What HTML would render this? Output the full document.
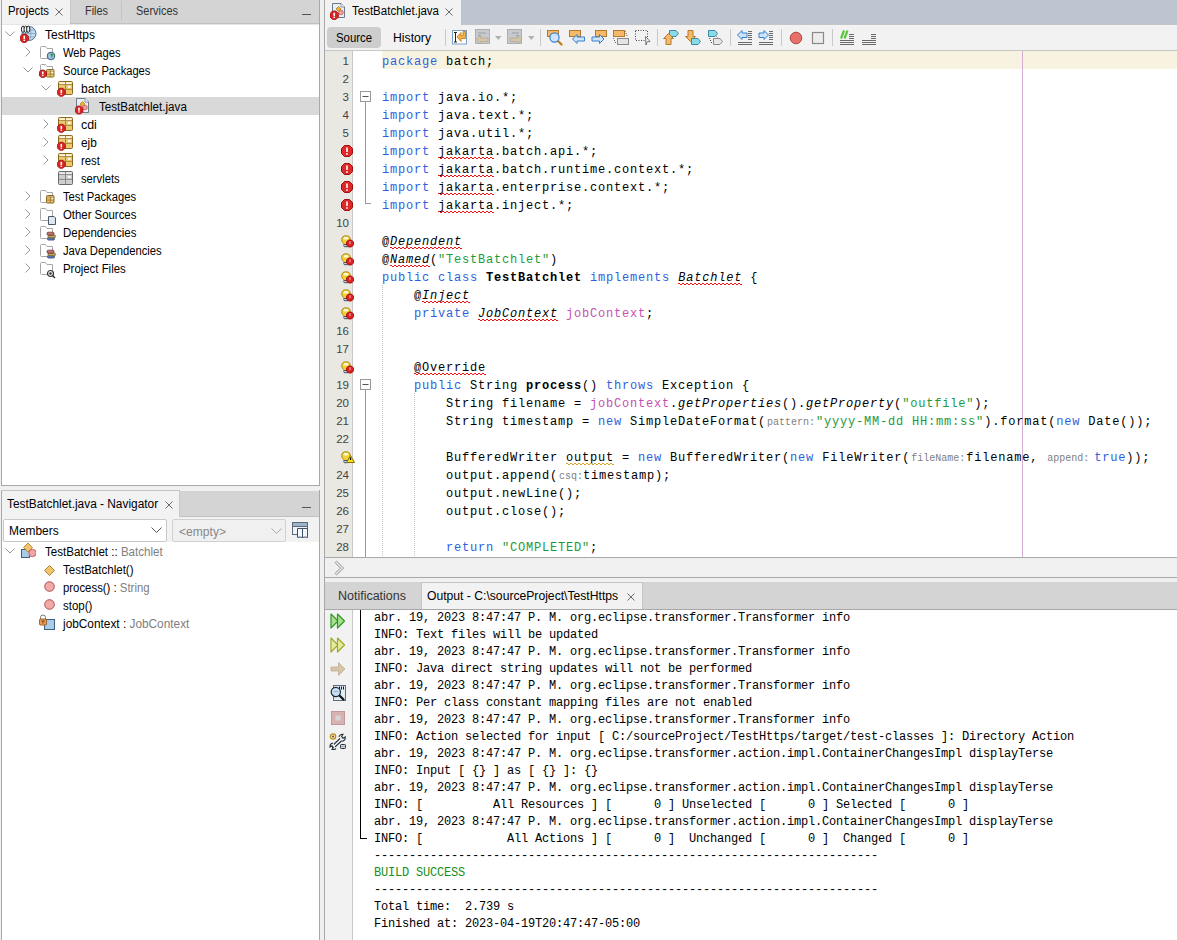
<!DOCTYPE html><html><head><meta charset="utf-8"><style>
*{margin:0;padding:0;box-sizing:border-box}
html,body{width:1177px;height:940px;overflow:hidden}
body{background:#f0f0f0;font-family:"Liberation Sans",sans-serif;font-size:12px;color:#000;position:relative}
.a{position:absolute}
.t{position:absolute;white-space:pre;line-height:14px}
.m{font-family:"Liberation Mono",monospace}
.k{color:#2f5fe0}
.s{color:#1e9a3a}
.f{color:#c74fb4}
.g{color:#808080}
.b{font-weight:bold}
.i{font-style:italic}
.w,.ww{position:relative}.w::after,.ww::after{content:'';position:absolute;left:0;right:0;bottom:0px;height:2px;background:repeating-linear-gradient(90deg,#f01010 0 2px,transparent 2px 4px) 0 0/100% 1px no-repeat,repeating-linear-gradient(90deg,transparent 0 2px,#f01010 2px 4px) 0 1px/100% 1px no-repeat}
.ww::after{background:repeating-linear-gradient(90deg,#e0a020 0 2px,transparent 2px 4px) 0 0/100% 1px no-repeat,repeating-linear-gradient(90deg,transparent 0 2px,#e0a020 2px 4px) 0 1px/100% 1px no-repeat}
.h{display:inline-block;font-size:10px;letter-spacing:0;color:#808080;vertical-align:baseline;padding-left:1px}
</style></head><body>
<div class="a" style="left:2px;top:0px;width:317px;height:24px;background:#d4d4d4;"></div>
<div class="a" style="left:2px;top:0px;width:68px;height:24px;background:#f2f2f2;"></div>
<div class="a" style="left:121px;top:1px;width:1px;height:19px;background:#c4c4c4;"></div>
<div class="a" style="left:70px;top:0px;width:1px;height:24px;background:#c8c8c8;"></div>
<div class="a" style="left:70px;top:23px;width:249px;height:1px;background:#c0c0c0;"></div>
<div class="a" style="left:1px;top:0px;width:1px;height:486px;background:#a8a8a8;"></div>
<div class="a" style="left:319px;top:0px;width:1px;height:486px;background:#a8a8a8;"></div>
<div class="a" style="left:2px;top:24px;width:317px;height:1px;background:#e6e6e6;"></div>
<div class="a" style="left:2px;top:25px;width:317px;height:460px;background:#fff;"></div>
<div class="a" style="left:1px;top:485px;width:319px;height:1px;background:#a8a8a8;"></div>
<div class="t" style="left:8px;top:4px;font-size:12px;transform:scaleX(0.9467);transform-origin:0 0;">Projects</div>
<svg class="a" style="left:55px;top:8px" width="8" height="8" viewBox="0 0 8 8"><path d="M0.5 0.5 L7.5 7.5 M7.5 0.5 L0.5 7.5" stroke="#6a6a6a" stroke-width="1"/></svg>
<div class="t" style="left:85px;top:4px;font-size:12px;transform:scaleX(0.9092);transform-origin:0 0;color:#333">Files</div>
<div class="t" style="left:136px;top:4px;font-size:12px;transform:scaleX(0.9133);transform-origin:0 0;color:#333">Services</div>
<div class="a" style="left:302px;top:14px;width:9px;height:1px;background:#555;"></div>
<div class="a" style="left:2px;top:97px;width:317px;height:18px;background:#d9d9d9;"></div>
<svg class="a" style="left:5px;top:31px" width="10" height="6"><path d="M0.5 0.5 L5 5 L9.5 0.5" fill="none" stroke="#9a9a9a" stroke-width="1"/></svg>
<div class="t" style="left:45px;top:28px;font-size:12px;transform:scaleX(1.0);transform-origin:0 0;">TestHttps</div>
<svg class="a" style="left:20px;top:25px" width="18" height="18" viewBox="0 0 18 18"><circle cx="9" cy="8.5" r="7" fill="#c4dcf0" stroke="#4f6f8f" stroke-width="1"/><path d="M2.5 8.5 H15.5 M9 1.5 Q5 8.5 9 15.5 M9 1.5 Q13 8.5 9 15.5 M3.5 5 H14.5 M3.5 12 H14.5" fill="none" stroke="#7d9cb8" stroke-width=".7"/><ellipse cx="3" cy="4.2" rx="1.6" ry="3.2" fill="#f2f5f8" stroke="#222" stroke-width="1"/><ellipse cx="5.6" cy="4.2" rx="1.6" ry="3.2" fill="#f2f5f8" stroke="#222" stroke-width="1"/><ellipse cx="8.2" cy="4.2" rx="1.6" ry="3.2" fill="#f2f5f8" stroke="#222" stroke-width="1"/><path d="M2.55 9 H5.95 L8.5 11.55 V14.95 L5.95 17.5 H2.55 L0 14.95 V11.55Z" fill="#d82424" stroke="#9a0c0c" stroke-width="0.7" stroke-linejoin="miter"/><rect x="3.45" y="10.7" width="1.6" height="3.23" fill="#fff"/><rect x="3.45" y="14.61" width="1.6" height="1.36" fill="#fff"/></svg>
<svg class="a" style="left:25px;top:47px" width="6" height="10"><path d="M0.5 0.5 L5 5 L0.5 9.5" fill="none" stroke="#9a9a9a" stroke-width="1"/></svg>
<div class="t" style="left:63px;top:46px;font-size:12px;transform:scaleX(0.9317);transform-origin:0 0;">Web Pages</div>
<svg class="a" style="left:40px;top:46px" width="16" height="16" viewBox="0 0 16 16"><path d="M0.5 11.5 V1.5 Q0.5 0.5 1.5 0.5 H5.5 L7 2.5 H12.5 V11.5 Q12.5 12.5 11.5 12.5 H1.5 Q0.5 12.5 0.5 11.5Z" fill="#fff" stroke="#a6a6a6"/><circle cx="11" cy="10" r="3.8" fill="#9cc0e0" stroke="#3d5f80" stroke-width="1"/><path d="M10 7.5 L13.5 8 L12 12 Z" fill="#3aa030"/></svg>
<svg class="a" style="left:23px;top:67px" width="10" height="6"><path d="M0.5 0.5 L5 5 L9.5 0.5" fill="none" stroke="#9a9a9a" stroke-width="1"/></svg>
<div class="t" style="left:63px;top:64px;font-size:12px;transform:scaleX(0.9292);transform-origin:0 0;">Source Packages</div>
<svg class="a" style="left:39px;top:64px" width="16" height="16" viewBox="0 0 16 16"><path d="M1.5 11.5 V1.5 Q1.5 0.5 2.5 0.5 H6.5 L8 2.5 H13.5 V11.5 Q13.5 12.5 12.5 12.5 H2.5 Q1.5 12.5 1.5 11.5Z" fill="#fff" stroke="#a6a6a6"/><rect x="7.5" y="5.5" width="7.5" height="7.5" rx="1" fill="#ecc870" stroke="#8a6a20"/><rect x="8.5" y="6.2" width="2.25" height="1.53" fill="#fff4d8"/><rect x="11.75" y="6.2" width="2.25" height="1.53" fill="#fff4d8"/><path d="M11.25 6 V12.5 M8 7.125 H14.5 M8 10.1 H14.5" stroke="#8a6a20" stroke-width="0.9" opacity="0.75"/><rect x="12.61" y="8.06" width="1.53" height="1.105" fill="#fff"/><path d="M2.25 6 H5.25 L7.5 8.25 V11.25 L5.25 13.5 H2.25 L0 11.25 V8.25Z" fill="#d82424" stroke="#9a0c0c" stroke-width="0.7" stroke-linejoin="miter"/><rect x="2.95" y="7.5" width="1.6" height="2.85" fill="#fff"/><rect x="2.95" y="10.95" width="1.6" height="1.2" fill="#fff"/></svg>
<svg class="a" style="left:41px;top:85px" width="10" height="6"><path d="M0.5 0.5 L5 5 L9.5 0.5" fill="none" stroke="#9a9a9a" stroke-width="1"/></svg>
<div class="t" style="left:81px;top:82px;font-size:12px;transform:scaleX(1.0133);transform-origin:0 0;">batch</div>
<svg class="a" style="left:57px;top:81px" width="17" height="17" viewBox="0 0 17 17"><rect x="1.5" y="0.5" width="14" height="13" rx="1" fill="#ecc870" stroke="#8a6a20"/><rect x="2.5" y="1.2" width="5.5" height="2.52" fill="#fff4d8"/><rect x="9.0" y="1.2" width="5.5" height="2.52" fill="#fff4d8"/><path d="M8.5 1 V13 M2 3.5 H15 M2 8.4 H15" stroke="#8a6a20" stroke-width="0.9" opacity="0.75"/><rect x="10.9" y="5.04" width="2.6999999999999997" height="1.82" fill="#fff"/><path d="M2.6999999999999997 7.3 H5.9 L8.3 9.7 V12.9 L5.9 15.3 H2.6999999999999997 L0.3 12.9 V9.7Z" fill="#d82424" stroke="#9a0c0c" stroke-width="0.7" stroke-linejoin="miter"/><rect x="3.5" y="8.9" width="1.6" height="3.04" fill="#fff"/><rect x="3.5" y="12.58" width="1.6" height="1.28" fill="#fff"/></svg>
<div class="t" style="left:99px;top:100px;font-size:12px;transform:scaleX(0.9683);transform-origin:0 0;">TestBatchlet.java</div>
<svg class="a" style="left:75px;top:98px" width="16" height="17" viewBox="0 0 16 17"><path d="M1.5 0.5 H10 L13.5 4 V14.5 H1.5Z" fill="#e6eef7" stroke="#6e7a88"/><path d="M10 0.5 V4 H13.5" fill="#fff" stroke="#6e7a88" stroke-width=".8"/><path d="M7.5 3.5 L10 6 L7.5 8.5 L5 6Z" fill="#f0b030" stroke="#b07a10" stroke-width=".7"/><circle cx="10" cy="9.5" r="2.3" fill="#f3a0a0" stroke="#c05050" stroke-width=".7"/><path d="M2.4 8 H5.6 L8 10.4 V13.6 L5.6 16 H2.4 L0 13.6 V10.4Z" fill="#d82424" stroke="#9a0c0c" stroke-width="0.7" stroke-linejoin="miter"/><rect x="3.2" y="9.6" width="1.6" height="3.04" fill="#fff"/><rect x="3.2" y="13.280000000000001" width="1.6" height="1.28" fill="#fff"/></svg>
<svg class="a" style="left:43px;top:119px" width="6" height="10"><path d="M0.5 0.5 L5 5 L0.5 9.5" fill="none" stroke="#9a9a9a" stroke-width="1"/></svg>
<div class="t" style="left:81px;top:118px;font-size:12px;transform:scaleX(1.0325);transform-origin:0 0;">cdi</div>
<svg class="a" style="left:57px;top:117px" width="17" height="17" viewBox="0 0 17 17"><rect x="1.5" y="0.5" width="14" height="13" rx="1" fill="#ecc870" stroke="#8a6a20"/><rect x="2.5" y="1.2" width="5.5" height="2.52" fill="#fff4d8"/><rect x="9.0" y="1.2" width="5.5" height="2.52" fill="#fff4d8"/><path d="M8.5 1 V13 M2 3.5 H15 M2 8.4 H15" stroke="#8a6a20" stroke-width="0.9" opacity="0.75"/><rect x="10.9" y="5.04" width="2.6999999999999997" height="1.82" fill="#fff"/><path d="M2.6999999999999997 7.3 H5.9 L8.3 9.7 V12.9 L5.9 15.3 H2.6999999999999997 L0.3 12.9 V9.7Z" fill="#d82424" stroke="#9a0c0c" stroke-width="0.7" stroke-linejoin="miter"/><rect x="3.5" y="8.9" width="1.6" height="3.04" fill="#fff"/><rect x="3.5" y="12.58" width="1.6" height="1.28" fill="#fff"/></svg>
<svg class="a" style="left:43px;top:137px" width="6" height="10"><path d="M0.5 0.5 L5 5 L0.5 9.5" fill="none" stroke="#9a9a9a" stroke-width="1"/></svg>
<div class="t" style="left:81px;top:136px;font-size:12px;transform:scaleX(0.9875);transform-origin:0 0;">ejb</div>
<svg class="a" style="left:57px;top:135px" width="17" height="17" viewBox="0 0 17 17"><rect x="1.5" y="0.5" width="14" height="13" rx="1" fill="#ecc870" stroke="#8a6a20"/><rect x="2.5" y="1.2" width="5.5" height="2.52" fill="#fff4d8"/><rect x="9.0" y="1.2" width="5.5" height="2.52" fill="#fff4d8"/><path d="M8.5 1 V13 M2 3.5 H15 M2 8.4 H15" stroke="#8a6a20" stroke-width="0.9" opacity="0.75"/><rect x="10.9" y="5.04" width="2.6999999999999997" height="1.82" fill="#fff"/><path d="M2.6999999999999997 7.3 H5.9 L8.3 9.7 V12.9 L5.9 15.3 H2.6999999999999997 L0.3 12.9 V9.7Z" fill="#d82424" stroke="#9a0c0c" stroke-width="0.7" stroke-linejoin="miter"/><rect x="3.5" y="8.9" width="1.6" height="3.04" fill="#fff"/><rect x="3.5" y="12.58" width="1.6" height="1.28" fill="#fff"/></svg>
<svg class="a" style="left:43px;top:155px" width="6" height="10"><path d="M0.5 0.5 L5 5 L0.5 9.5" fill="none" stroke="#9a9a9a" stroke-width="1"/></svg>
<div class="t" style="left:81px;top:154px;font-size:12px;transform:scaleX(0.94);transform-origin:0 0;">rest</div>
<svg class="a" style="left:57px;top:153px" width="17" height="17" viewBox="0 0 17 17"><rect x="1.5" y="0.5" width="14" height="13" rx="1" fill="#ecc870" stroke="#8a6a20"/><rect x="2.5" y="1.2" width="5.5" height="2.52" fill="#fff4d8"/><rect x="9.0" y="1.2" width="5.5" height="2.52" fill="#fff4d8"/><path d="M8.5 1 V13 M2 3.5 H15 M2 8.4 H15" stroke="#8a6a20" stroke-width="0.9" opacity="0.75"/><rect x="10.9" y="5.04" width="2.6999999999999997" height="1.82" fill="#fff"/><path d="M2.6999999999999997 7.3 H5.9 L8.3 9.7 V12.9 L5.9 15.3 H2.6999999999999997 L0.3 12.9 V9.7Z" fill="#d82424" stroke="#9a0c0c" stroke-width="0.7" stroke-linejoin="miter"/><rect x="3.5" y="8.9" width="1.6" height="3.04" fill="#fff"/><rect x="3.5" y="12.58" width="1.6" height="1.28" fill="#fff"/></svg>
<div class="t" style="left:81px;top:172px;font-size:12px;transform:scaleX(0.9367);transform-origin:0 0;">servlets</div>
<svg class="a" style="left:57px;top:171px" width="17" height="16" viewBox="0 0 17 16"><rect x="1.5" y="0.5" width="14" height="13" rx="1" fill="#cfcfcf" stroke="#6a6a6a"/><rect x="2.5" y="1.2" width="5.5" height="2.52" fill="#ececec"/><rect x="9.0" y="1.2" width="5.5" height="2.52" fill="#ececec"/><path d="M8.5 1 V13 M2 3.5 H15 M2 8.4 H15" stroke="#6a6a6a" stroke-width="0.9" opacity="0.75"/><rect x="10.9" y="5.04" width="2.6999999999999997" height="1.82" fill="#fff"/></svg>
<svg class="a" style="left:25px;top:191px" width="6" height="10"><path d="M0.5 0.5 L5 5 L0.5 9.5" fill="none" stroke="#9a9a9a" stroke-width="1"/></svg>
<div class="t" style="left:63px;top:190px;font-size:12px;transform:scaleX(0.9358);transform-origin:0 0;">Test Packages</div>
<svg class="a" style="left:40px;top:190px" width="16" height="16" viewBox="0 0 16 16"><path d="M0.5 11.5 V1.5 Q0.5 0.5 1.5 0.5 H5.5 L7 2.5 H12.5 V11.5 Q12.5 12.5 11.5 12.5 H1.5 Q0.5 12.5 0.5 11.5Z" fill="#fff" stroke="#a6a6a6"/><rect x="6.5" y="5.5" width="7.5" height="7.5" rx="1" fill="#e8c26a" stroke="#8a6420"/><rect x="7.5" y="6.2" width="2.25" height="1.53" fill="#f8e6b8"/><rect x="10.75" y="6.2" width="2.25" height="1.53" fill="#f8e6b8"/><path d="M10.25 6 V12.5 M7 7.125 H13.5 M7 10.1 H13.5" stroke="#8a6420" stroke-width="0.9" opacity="0.75"/><rect x="11.61" y="8.06" width="1.53" height="1.105" fill="#fff"/></svg>
<svg class="a" style="left:25px;top:209px" width="6" height="10"><path d="M0.5 0.5 L5 5 L0.5 9.5" fill="none" stroke="#9a9a9a" stroke-width="1"/></svg>
<div class="t" style="left:63px;top:208px;font-size:12px;transform:scaleX(0.9483);transform-origin:0 0;">Other Sources</div>
<svg class="a" style="left:40px;top:208px" width="17" height="17" viewBox="0 0 17 17"><path d="M0.5 11.5 V1.5 Q0.5 0.5 1.5 0.5 H5.5 L7 2.5 H12.5 V11.5 Q12.5 12.5 11.5 12.5 H1.5 Q0.5 12.5 0.5 11.5Z" fill="#fff" stroke="#a6a6a6"/><path d="M8.5 8.5 H14 L15.5 10 V16.5 H8.5Z" fill="#dde7f2" stroke="#4a5866" stroke-width="1"/></svg>
<svg class="a" style="left:25px;top:227px" width="6" height="10"><path d="M0.5 0.5 L5 5 L0.5 9.5" fill="none" stroke="#9a9a9a" stroke-width="1"/></svg>
<div class="t" style="left:63px;top:226px;font-size:12px;transform:scaleX(0.9567);transform-origin:0 0;">Dependencies</div>
<svg class="a" style="left:40px;top:226px" width="17" height="17" viewBox="0 0 17 17"><path d="M0.5 11.5 V1.5 Q0.5 0.5 1.5 0.5 H5.5 L7 2.5 H12.5 V11.5 Q12.5 12.5 11.5 12.5 H1.5 Q0.5 12.5 0.5 11.5Z" fill="#fff" stroke="#a6a6a6"/><rect x="7.5" y="11.5" width="7" height="2.6" rx="1" fill="#5a78b8" stroke="#2a3f78" stroke-width=".7"/><rect x="8" y="9" width="7.5" height="2.8" rx="1.2" fill="#b8a860" stroke="#6a5a20" stroke-width=".7"/><rect x="7" y="6.2" width="7" height="3" rx="1.2" fill="#c07070" stroke="#6a2a2a" stroke-width=".7"/></svg>
<svg class="a" style="left:25px;top:245px" width="6" height="10"><path d="M0.5 0.5 L5 5 L0.5 9.5" fill="none" stroke="#9a9a9a" stroke-width="1"/></svg>
<div class="t" style="left:63px;top:244px;font-size:12px;transform:scaleX(0.9367);transform-origin:0 0;">Java Dependencies</div>
<svg class="a" style="left:40px;top:244px" width="17" height="17" viewBox="0 0 17 17"><path d="M0.5 11.5 V1.5 Q0.5 0.5 1.5 0.5 H5.5 L7 2.5 H12.5 V11.5 Q12.5 12.5 11.5 12.5 H1.5 Q0.5 12.5 0.5 11.5Z" fill="#fff" stroke="#a6a6a6"/><rect x="7.5" y="11.5" width="7" height="2.6" rx="1" fill="#5a78b8" stroke="#2a3f78" stroke-width=".7"/><rect x="8" y="9" width="7.5" height="2.8" rx="1.2" fill="#b8a860" stroke="#6a5a20" stroke-width=".7"/><rect x="7" y="6.2" width="7" height="3" rx="1.2" fill="#c07070" stroke="#6a2a2a" stroke-width=".7"/></svg>
<svg class="a" style="left:25px;top:263px" width="6" height="10"><path d="M0.5 0.5 L5 5 L0.5 9.5" fill="none" stroke="#9a9a9a" stroke-width="1"/></svg>
<div class="t" style="left:63px;top:262px;font-size:12px;transform:scaleX(0.95);transform-origin:0 0;">Project Files</div>
<svg class="a" style="left:40px;top:262px" width="17" height="17" viewBox="0 0 17 17"><path d="M0.5 11.5 V1.5 Q0.5 0.5 1.5 0.5 H5.5 L7 2.5 H12.5 V11.5 Q12.5 12.5 11.5 12.5 H1.5 Q0.5 12.5 0.5 11.5Z" fill="#fff" stroke="#a6a6a6"/><circle cx="10.5" cy="11.5" r="3" fill="#eee" stroke="#333" stroke-width="1.2"/><circle cx="10.5" cy="11.5" r="1.2" fill="#333"/><path d="M12.5 13.5 L15 16" stroke="#333" stroke-width="1.5"/></svg>
<div class="a" style="left:1px;top:490px;width:1px;height:450px;background:#a8a8a8;"></div>
<div class="a" style="left:1px;top:490px;width:179px;height:1px;background:#c4c4c4;"></div>
<div class="a" style="left:319px;top:490px;width:1px;height:450px;background:#a8a8a8;"></div>
<div class="a" style="left:2px;top:491px;width:317px;height:26px;background:#d4d4d4;"></div>
<div class="a" style="left:2px;top:491px;width:177px;height:27px;background:#f2f2f2;"></div>
<div class="t" style="left:7px;top:497px;font-size:12px;transform:scaleX(0.9892);transform-origin:0 0;">TestBatchlet.java - Navigator</div>
<svg class="a" style="left:165px;top:501px" width="8" height="8" viewBox="0 0 8 8"><path d="M0.5 0.5 L7.5 7.5 M7.5 0.5 L0.5 7.5" stroke="#6a6a6a" stroke-width="1"/></svg>
<div class="a" style="left:302px;top:507px;width:9px;height:1px;background:#555;"></div>
<div class="a" style="left:2px;top:517px;width:317px;height:25px;background:#f2f2f2;"></div>
<div class="a" style="left:179px;top:516px;width:140px;height:1px;background:#c0c0c0;"></div>
<div class="a" style="left:179px;top:491px;width:1px;height:26px;background:#c8c8c8;"></div>
<div class="a" style="left:3px;top:519px;width:164px;height:23px;background:#fff;border:1px solid #c8c8c8;border-radius:2px"></div>
<div class="t" style="left:9px;top:524px;font-size:12px;transform:scaleX(0.9917);transform-origin:0 0;">Members</div>
<svg class="a" style="left:151px;top:527px" width="11" height="6"><path d="M0.5 0.5 L5.5 5.5 L10.5 0.5" fill="none" stroke="#555" stroke-width="1"/></svg>
<div class="a" style="left:172px;top:519px;width:114px;height:23px;background:#f0f0f0;border:1px solid #d0d0d0;border-radius:2px"></div>
<div class="t" style="left:179px;top:525px;font-size:12px;transform:scaleX(1.0067);transform-origin:0 0;color:#888">&lt;empty&gt;</div>
<svg class="a" style="left:271px;top:528px" width="11" height="6"><path d="M0.5 0.5 L5.5 5.5 L10.5 0.5" fill="none" stroke="#aaa" stroke-width="1"/></svg>
<div class="a" style="left:2px;top:542px;width:317px;height:398px;background:#fff;"></div>
<svg class="a" style="left:291px;top:521px" width="18" height="18" viewBox="0 0 18 18"><rect x="1.5" y="1.5" width="15" height="12" fill="#eef3f8" stroke="#5a6878" stroke-width="1"/><rect x="2" y="2" width="14" height="3" fill="#9ab4cc"/><path d="M1.5 5.5 H16.5" stroke="#5a6878"/><path d="M6.5 7.5 H11.5 V16.5 Q9 15.5 6.5 16.5Z M11.5 7.5 H16.5 V16.5 Q14 15.5 11.5 16.5Z" fill="#f4f8fc" stroke="#3e5068" stroke-width="1"/></svg>
<svg class="a" style="left:5px;top:548px" width="10" height="6"><path d="M0.5 0.5 L5 5 L9.5 0.5" fill="none" stroke="#9a9a9a" stroke-width="1"/></svg>
<div class="t" style="left:45px;top:545px;font-size:12px;transform:scaleX(0.9642);transform-origin:0 0;">TestBatchlet :: <span class="g">Batchlet</span></div>
<svg class="a" style="left:20px;top:542px" width="16" height="16" viewBox="0 0 16 16"><rect x="1.5" y="7.5" width="8" height="8" fill="#a9cbe8" stroke="#3e5f80"/><path d="M8 1 L12.5 5.5 L8 10 L3.5 5.5Z" fill="#f2c46a" stroke="#a87a20" stroke-width=".8"/><circle cx="12.5" cy="11" r="3.7" fill="#f5a5a5" stroke="#b05050" stroke-width=".8"/></svg>
<div class="t" style="left:63px;top:563px;font-size:12px;transform:scaleX(0.9617);transform-origin:0 0;">TestBatchlet()</div>
<svg class="a" style="left:44px;top:565px" width="11" height="11" viewBox="0 0 11 11"><path d="M5.5 0.5 L10.5 5.5 L5.5 10.5 L0.5 5.5Z" fill="#f2c46a" stroke="#a87a20" stroke-width=".9"/></svg>
<div class="t" style="left:63px;top:581px;font-size:12px;transform:scaleX(0.9475);transform-origin:0 0;">process() : <span class="g">String</span></div>
<svg class="a" style="left:44px;top:581px" width="11" height="11" viewBox="0 0 11 11"><circle cx="5.5" cy="5.5" r="4.8" fill="#f5a8a8" stroke="#a85050" stroke-width="1"/></svg>
<div class="t" style="left:63px;top:599px;font-size:12px;transform:scaleX(0.9575);transform-origin:0 0;">stop()</div>
<svg class="a" style="left:44px;top:599px" width="11" height="11" viewBox="0 0 11 11"><circle cx="5.5" cy="5.5" r="4.8" fill="#f5a8a8" stroke="#a85050" stroke-width="1"/></svg>
<div class="t" style="left:63px;top:617px;font-size:12px;transform:scaleX(0.9867);transform-origin:0 0;">jobContext : <span class="g">JobContext</span></div>
<svg class="a" style="left:38px;top:614px" width="18" height="16" viewBox="0 0 18 16"><rect x="6.5" y="5.5" width="10" height="10" fill="#a9cbe8" stroke="#3e5f80"/><path d="M2.5 5 V3.5 Q2.5 1 5 1 Q7.5 1 7.5 3.5 V5" fill="none" stroke="#777" stroke-width="1"/><rect x="1.5" y="5" width="7" height="6" rx="1" fill="#e89a5a" stroke="#8a5010" stroke-width=".8"/><path d="M3.5 7 H6.5 M5 7 V9.5" stroke="#5a3010" stroke-width=".8"/></svg>
<div class="a" style="left:320px;top:0px;width:4px;height:940px;background:#f0f0f0;"></div>
<div class="a" style="left:324px;top:0px;width:1px;height:940px;background:#a8a8a8;"></div>
<div class="a" style="left:325px;top:0px;width:852px;height:24px;background:#bdc6d0;"></div>
<div class="a" style="left:325px;top:0px;width:136px;height:24px;background:#f2f2f2;"></div>
<div class="t" style="left:352px;top:4px;font-size:12px;transform:scaleX(0.9592);transform-origin:0 0;">TestBatchlet.java</div>
<svg class="a" style="left:330px;top:3px" width="16" height="17" viewBox="0 0 16 17"><path d="M2.5 0.5 H11 L14.5 4 V14.5 H2.5Z" fill="#e6eef7" stroke="#6e7a88"/><path d="M11 0.5 V4 H14.5" fill="#fff" stroke="#6e7a88" stroke-width=".8"/><path d="M8.5 3.5 L11 6 L8.5 8.5 L6 6Z" fill="#f0b030" stroke="#b07a10" stroke-width=".7"/><circle cx="11" cy="9.5" r="2.3" fill="#f3a0a0" stroke="#c05050" stroke-width=".7"/><path d="M2.55 8 H5.95 L8.5 10.55 V13.95 L5.95 16.5 H2.55 L0 13.95 V10.55Z" fill="#d82424" stroke="#9a0c0c" stroke-width="0.7" stroke-linejoin="miter"/><rect x="3.45" y="9.7" width="1.6" height="3.23" fill="#fff"/><rect x="3.45" y="13.61" width="1.6" height="1.36" fill="#fff"/></svg>
<svg class="a" style="left:445px;top:8px" width="8" height="8" viewBox="0 0 8 8"><path d="M0.5 0.5 L7.5 7.5 M7.5 0.5 L0.5 7.5" stroke="#6a6a6a" stroke-width="1"/></svg>
<div class="a" style="left:325px;top:24px;width:852px;height:26px;background:#f2f2f2;"></div>
<div class="a" style="left:461px;top:24px;width:716px;height:1px;background:#c2c6ca;"></div>
<div class="a" style="left:327px;top:27px;width:54px;height:21px;background:#cdcdcd;border-radius:4px"></div>
<div class="t" style="left:336px;top:31px;font-size:12px;transform:scaleX(0.9475);transform-origin:0 0;">Source</div>
<div class="t" style="left:393px;top:31px;font-size:12px;transform:scaleX(1.0192);transform-origin:0 0;">History</div>
<div class="a" style="left:325px;top:50px;width:852px;height:1px;background:#c6c6c6;"></div>
<div class="a" style="left:325px;top:51px;width:852px;height:506px;background:#fff;"></div>
<div class="a" style="left:325px;top:51px;width:27px;height:506px;background:#e9e8e2;"></div>
<div class="a" style="left:352px;top:51px;width:1px;height:506px;background:#c8c8c4;"></div>
<div class="a" style="left:382px;top:51px;width:795px;height:18px;background:#f8f3e0;"></div>
<div class="a" style="left:1022px;top:51px;width:1px;height:506px;background:#d4acd4;"></div>
<div class="a" style="left:325px;top:557px;width:852px;height:1px;background:#a8a8a8;"></div>
<div class="a" style="left:325px;top:577px;width:852px;height:1px;background:#a8a8a8;"></div>
<div class="a" style="left:325px;top:51px;width:852px;height:506px;overflow:hidden">
<div class="t m" style="left:57px;top:2px;line-height:18px;font-size:12px;letter-spacing:0.8px"><span class="k">package</span> batch;</div>
<div class="t" style="left:0;width:24px;text-align:right;top:1px;line-height:18px;font-size:11.5px;color:#444">1</div>
<div class="t m" style="left:57px;top:20px;line-height:18px;font-size:12px;letter-spacing:0.8px"></div>
<div class="t" style="left:0;width:24px;text-align:right;top:19px;line-height:18px;font-size:11.5px;color:#444">2</div>
<div class="t m" style="left:57px;top:38px;line-height:18px;font-size:12px;letter-spacing:0.8px"><span class="k">import</span> java.io.*;</div>
<div class="t" style="left:0;width:24px;text-align:right;top:37px;line-height:18px;font-size:11.5px;color:#444">3</div>
<div class="t m" style="left:57px;top:56px;line-height:18px;font-size:12px;letter-spacing:0.8px"><span class="k">import</span> java.text.*;</div>
<div class="t" style="left:0;width:24px;text-align:right;top:55px;line-height:18px;font-size:11.5px;color:#444">4</div>
<div class="t m" style="left:57px;top:74px;line-height:18px;font-size:12px;letter-spacing:0.8px"><span class="k">import</span> java.util.*;</div>
<div class="t" style="left:0;width:24px;text-align:right;top:73px;line-height:18px;font-size:11.5px;color:#444">5</div>
<div class="t m" style="left:57px;top:92px;line-height:18px;font-size:12px;letter-spacing:0.8px"><span class="k">import</span> <span class="w">jakarta</span>.batch.api.*;</div>
<svg class="a" style="left:16px;top:94px" width="12" height="12" viewBox="0 0 12 12"><path d="M3.5 0.5 H8.5 L11.5 3.5 V8.5 L8.5 11.5 H3.5 L0.5 8.5 V3.5Z" fill="#dc2a2a" stroke="#a01010" stroke-width="1"/><path d="M6 2.5 V7" stroke="#fff" stroke-width="1.6"/><rect x="5.2" y="8.2" width="1.6" height="1.6" fill="#fff"/></svg>
<div class="t m" style="left:57px;top:110px;line-height:18px;font-size:12px;letter-spacing:0.8px"><span class="k">import</span> <span class="w">jakarta</span>.batch.runtime.context.*;</div>
<svg class="a" style="left:16px;top:112px" width="12" height="12" viewBox="0 0 12 12"><path d="M3.5 0.5 H8.5 L11.5 3.5 V8.5 L8.5 11.5 H3.5 L0.5 8.5 V3.5Z" fill="#dc2a2a" stroke="#a01010" stroke-width="1"/><path d="M6 2.5 V7" stroke="#fff" stroke-width="1.6"/><rect x="5.2" y="8.2" width="1.6" height="1.6" fill="#fff"/></svg>
<div class="t m" style="left:57px;top:128px;line-height:18px;font-size:12px;letter-spacing:0.8px"><span class="k">import</span> <span class="w">jakarta</span>.enterprise.context.*;</div>
<svg class="a" style="left:16px;top:130px" width="12" height="12" viewBox="0 0 12 12"><path d="M3.5 0.5 H8.5 L11.5 3.5 V8.5 L8.5 11.5 H3.5 L0.5 8.5 V3.5Z" fill="#dc2a2a" stroke="#a01010" stroke-width="1"/><path d="M6 2.5 V7" stroke="#fff" stroke-width="1.6"/><rect x="5.2" y="8.2" width="1.6" height="1.6" fill="#fff"/></svg>
<div class="t m" style="left:57px;top:146px;line-height:18px;font-size:12px;letter-spacing:0.8px"><span class="k">import</span> <span class="w">jakarta</span>.inject.*;</div>
<svg class="a" style="left:16px;top:148px" width="12" height="12" viewBox="0 0 12 12"><path d="M3.5 0.5 H8.5 L11.5 3.5 V8.5 L8.5 11.5 H3.5 L0.5 8.5 V3.5Z" fill="#dc2a2a" stroke="#a01010" stroke-width="1"/><path d="M6 2.5 V7" stroke="#fff" stroke-width="1.6"/><rect x="5.2" y="8.2" width="1.6" height="1.6" fill="#fff"/></svg>
<div class="t m" style="left:57px;top:164px;line-height:18px;font-size:12px;letter-spacing:0.8px"></div>
<div class="t" style="left:0;width:24px;text-align:right;top:163px;line-height:18px;font-size:11.5px;color:#444">10</div>
<div class="t m" style="left:57px;top:182px;line-height:18px;font-size:12px;letter-spacing:0.8px">@<span class="i w">Dependent</span></div>
<svg class="a" style="left:16px;top:184px" width="14" height="13" viewBox="0 0 14 13"><path d="M5 0.8 Q9.3 0.8 9.3 4.8 Q9.3 7 7.3 8.6 V9.5 H2.7 V8.6 Q0.7 7 0.7 4.8 Q0.7 0.8 5 0.8Z" fill="#f2d23a" stroke="#b08a10" stroke-width="1"/><ellipse cx="5" cy="3.3" rx="2.5" ry="1.2" fill="#fffbe0"/><rect x="2.8" y="9.5" width="4.4" height="2.2" rx="1" fill="#dfe6ee" stroke="#3a4a68" stroke-width="1"/><path d="M7.5 5 H10.5 L12.5 7 V10 L10.5 12 H7.5 L5.5 10 V7Z" fill="#dc2020" stroke="#900808" stroke-width=".8"/><path d="M9 6.2 V9.3" stroke="#fbb" stroke-width="1"/></svg>
<div class="t m" style="left:57px;top:200px;line-height:18px;font-size:12px;letter-spacing:0.8px">@<span class="i w">Named</span>(<span class="s">"TestBatchlet"</span>)</div>
<svg class="a" style="left:16px;top:202px" width="14" height="13" viewBox="0 0 14 13"><path d="M5 0.8 Q9.3 0.8 9.3 4.8 Q9.3 7 7.3 8.6 V9.5 H2.7 V8.6 Q0.7 7 0.7 4.8 Q0.7 0.8 5 0.8Z" fill="#f2d23a" stroke="#b08a10" stroke-width="1"/><ellipse cx="5" cy="3.3" rx="2.5" ry="1.2" fill="#fffbe0"/><rect x="2.8" y="9.5" width="4.4" height="2.2" rx="1" fill="#dfe6ee" stroke="#3a4a68" stroke-width="1"/><path d="M7.5 5 H10.5 L12.5 7 V10 L10.5 12 H7.5 L5.5 10 V7Z" fill="#dc2020" stroke="#900808" stroke-width=".8"/><path d="M9 6.2 V9.3" stroke="#fbb" stroke-width="1"/></svg>
<div class="t m" style="left:57px;top:218px;line-height:18px;font-size:12px;letter-spacing:0.8px"><span class="k">public</span> <span class="k">class</span> <span class="b">TestBatchlet</span> <span class="k">implements</span> <span class="i w">Batchlet</span> {</div>
<svg class="a" style="left:16px;top:220px" width="14" height="13" viewBox="0 0 14 13"><path d="M5 0.8 Q9.3 0.8 9.3 4.8 Q9.3 7 7.3 8.6 V9.5 H2.7 V8.6 Q0.7 7 0.7 4.8 Q0.7 0.8 5 0.8Z" fill="#f2d23a" stroke="#b08a10" stroke-width="1"/><ellipse cx="5" cy="3.3" rx="2.5" ry="1.2" fill="#fffbe0"/><rect x="2.8" y="9.5" width="4.4" height="2.2" rx="1" fill="#dfe6ee" stroke="#3a4a68" stroke-width="1"/><path d="M7.5 5 H10.5 L12.5 7 V10 L10.5 12 H7.5 L5.5 10 V7Z" fill="#dc2020" stroke="#900808" stroke-width=".8"/><path d="M9 6.2 V9.3" stroke="#fbb" stroke-width="1"/></svg>
<div class="t m" style="left:57px;top:236px;line-height:18px;font-size:12px;letter-spacing:0.8px">    @<span class="i w">Inject</span></div>
<svg class="a" style="left:16px;top:238px" width="14" height="13" viewBox="0 0 14 13"><path d="M5 0.8 Q9.3 0.8 9.3 4.8 Q9.3 7 7.3 8.6 V9.5 H2.7 V8.6 Q0.7 7 0.7 4.8 Q0.7 0.8 5 0.8Z" fill="#f2d23a" stroke="#b08a10" stroke-width="1"/><ellipse cx="5" cy="3.3" rx="2.5" ry="1.2" fill="#fffbe0"/><rect x="2.8" y="9.5" width="4.4" height="2.2" rx="1" fill="#dfe6ee" stroke="#3a4a68" stroke-width="1"/><path d="M7.5 5 H10.5 L12.5 7 V10 L10.5 12 H7.5 L5.5 10 V7Z" fill="#dc2020" stroke="#900808" stroke-width=".8"/><path d="M9 6.2 V9.3" stroke="#fbb" stroke-width="1"/></svg>
<div class="t m" style="left:57px;top:254px;line-height:18px;font-size:12px;letter-spacing:0.8px">    <span class="k">private</span> <span class="i w">JobContext</span> <span class="f">jobContext</span>;</div>
<svg class="a" style="left:16px;top:256px" width="14" height="13" viewBox="0 0 14 13"><path d="M5 0.8 Q9.3 0.8 9.3 4.8 Q9.3 7 7.3 8.6 V9.5 H2.7 V8.6 Q0.7 7 0.7 4.8 Q0.7 0.8 5 0.8Z" fill="#f2d23a" stroke="#b08a10" stroke-width="1"/><ellipse cx="5" cy="3.3" rx="2.5" ry="1.2" fill="#fffbe0"/><rect x="2.8" y="9.5" width="4.4" height="2.2" rx="1" fill="#dfe6ee" stroke="#3a4a68" stroke-width="1"/><path d="M7.5 5 H10.5 L12.5 7 V10 L10.5 12 H7.5 L5.5 10 V7Z" fill="#dc2020" stroke="#900808" stroke-width=".8"/><path d="M9 6.2 V9.3" stroke="#fbb" stroke-width="1"/></svg>
<div class="t m" style="left:57px;top:272px;line-height:18px;font-size:12px;letter-spacing:0.8px"></div>
<div class="t" style="left:0;width:24px;text-align:right;top:271px;line-height:18px;font-size:11.5px;color:#444">16</div>
<div class="t m" style="left:57px;top:290px;line-height:18px;font-size:12px;letter-spacing:0.8px"></div>
<div class="t" style="left:0;width:24px;text-align:right;top:289px;line-height:18px;font-size:11.5px;color:#444">17</div>
<div class="t m" style="left:57px;top:308px;line-height:18px;font-size:12px;letter-spacing:0.8px">    <span class="w">@Override</span></div>
<svg class="a" style="left:16px;top:310px" width="14" height="13" viewBox="0 0 14 13"><path d="M5 0.8 Q9.3 0.8 9.3 4.8 Q9.3 7 7.3 8.6 V9.5 H2.7 V8.6 Q0.7 7 0.7 4.8 Q0.7 0.8 5 0.8Z" fill="#f2d23a" stroke="#b08a10" stroke-width="1"/><ellipse cx="5" cy="3.3" rx="2.5" ry="1.2" fill="#fffbe0"/><rect x="2.8" y="9.5" width="4.4" height="2.2" rx="1" fill="#dfe6ee" stroke="#3a4a68" stroke-width="1"/><path d="M7.5 5 H10.5 L12.5 7 V10 L10.5 12 H7.5 L5.5 10 V7Z" fill="#dc2020" stroke="#900808" stroke-width=".8"/><path d="M9 6.2 V9.3" stroke="#fbb" stroke-width="1"/></svg>
<div class="t m" style="left:57px;top:326px;line-height:18px;font-size:12px;letter-spacing:0.8px">    <span class="k">public</span> String <span class="b">process</span>() <span class="k">throws</span> Exception {</div>
<div class="t" style="left:0;width:24px;text-align:right;top:325px;line-height:18px;font-size:11.5px;color:#444">19</div>
<div class="t m" style="left:57px;top:344px;line-height:18px;font-size:12px;letter-spacing:0.8px">        String filename = <span class="f">jobContext</span>.<span class="i">getProperties</span>().<span class="i">getProperty</span>(<span class="s">"outfile"</span>);</div>
<div class="t" style="left:0;width:24px;text-align:right;top:343px;line-height:18px;font-size:11.5px;color:#444">20</div>
<div class="t m" style="left:57px;top:362px;line-height:18px;font-size:12px;letter-spacing:0.8px">        String timestamp = <span class="k">new</span> SimpleDateFormat(<span class="h" style="width:50px">pattern:</span><span class="s">"yyyy-MM-dd HH:mm:ss"</span>).format(<span class="k">new</span> Date());</div>
<div class="t" style="left:0;width:24px;text-align:right;top:361px;line-height:18px;font-size:11.5px;color:#444">21</div>
<div class="t m" style="left:57px;top:380px;line-height:18px;font-size:12px;letter-spacing:0.8px"></div>
<div class="t" style="left:0;width:24px;text-align:right;top:379px;line-height:18px;font-size:11.5px;color:#444">22</div>
<div class="t m" style="left:57px;top:398px;line-height:18px;font-size:12px;letter-spacing:0.8px">        BufferedWriter <span class="ww">output</span> = <span class="k">new</span> BufferedWriter(<span class="k">new</span> FileWriter(<span class="h" style="width:56px">fileName:</span>filename, <span class="h" style="width:48px">append:</span><span class="k">true</span>));</div>
<svg class="a" style="left:16px;top:400px" width="14" height="13" viewBox="0 0 14 13"><path d="M5 0.8 Q9.3 0.8 9.3 4.8 Q9.3 7 7.3 8.6 V9.5 H2.7 V8.6 Q0.7 7 0.7 4.8 Q0.7 0.8 5 0.8Z" fill="#f2d23a" stroke="#b08a10" stroke-width="1"/><ellipse cx="5" cy="3.3" rx="2.5" ry="1.2" fill="#fffbe0"/><rect x="2.8" y="9.5" width="4.4" height="2.2" rx="1" fill="#dfe6ee" stroke="#3a4a68" stroke-width="1"/><path d="M9.5 4.5 L13.5 11.5 H5.5Z" fill="#f4e020" stroke="#8a7000" stroke-width="1"/><path d="M9.5 6.5 V9" stroke="#111" stroke-width="1.2"/></svg>
<div class="t m" style="left:57px;top:416px;line-height:18px;font-size:12px;letter-spacing:0.8px">        output.append(<span class="h" style="width:25px">csq:</span>timestamp);</div>
<div class="t" style="left:0;width:24px;text-align:right;top:415px;line-height:18px;font-size:11.5px;color:#444">24</div>
<div class="t m" style="left:57px;top:434px;line-height:18px;font-size:12px;letter-spacing:0.8px">        output.newLine();</div>
<div class="t" style="left:0;width:24px;text-align:right;top:433px;line-height:18px;font-size:11.5px;color:#444">25</div>
<div class="t m" style="left:57px;top:452px;line-height:18px;font-size:12px;letter-spacing:0.8px">        output.close();</div>
<div class="t" style="left:0;width:24px;text-align:right;top:451px;line-height:18px;font-size:11.5px;color:#444">26</div>
<div class="t m" style="left:57px;top:470px;line-height:18px;font-size:12px;letter-spacing:0.8px"></div>
<div class="t" style="left:0;width:24px;text-align:right;top:469px;line-height:18px;font-size:11.5px;color:#444">27</div>
<div class="t m" style="left:57px;top:488px;line-height:18px;font-size:12px;letter-spacing:0.8px">        <span class="k">return</span> <span class="s">"COMPLETED"</span>;</div>
<div class="t" style="left:0;width:24px;text-align:right;top:487px;line-height:18px;font-size:11.5px;color:#444">28</div>
</div>
<svg class="a" style="left:360px;top:91px" width="11" height="11" viewBox="0 0 11 11"><rect x="0.5" y="0.5" width="10" height="10" fill="#fff" stroke="#9a9a9a"/><path d="M2.5 5.5 H8.5" stroke="#555"/></svg>
<div class="a" style="left:365px;top:102px;width:1px;height:102px;background:#9a9a9a;"></div>
<div class="a" style="left:365px;top:203px;width:6px;height:1px;background:#9a9a9a;"></div>
<svg class="a" style="left:360px;top:379px" width="11" height="11" viewBox="0 0 11 11"><rect x="0.5" y="0.5" width="10" height="10" fill="#fff" stroke="#9a9a9a"/><path d="M2.5 5.5 H8.5" stroke="#555"/></svg>
<div class="a" style="left:365px;top:390px;width:1px;height:167px;background:#9a9a9a;"></div>
<div class="a" style="left:382px;top:285px;width:1px;height:272px;background:repeating-linear-gradient(#c0c0c0 0 1px,transparent 1px 2px)"></div>
<div class="a" style="left:414px;top:393px;width:1px;height:164px;background:repeating-linear-gradient(#c0c0c0 0 1px,transparent 1px 2px)"></div>
<div class="a" style="left:445px;top:29px;width:1px;height:17px;background:#c8c8c8;"></div>
<div class="a" style="left:540px;top:29px;width:1px;height:17px;background:#c8c8c8;"></div>
<div class="a" style="left:657px;top:29px;width:1px;height:17px;background:#c8c8c8;"></div>
<div class="a" style="left:730px;top:29px;width:1px;height:17px;background:#c8c8c8;"></div>
<div class="a" style="left:781px;top:29px;width:1px;height:17px;background:#c8c8c8;"></div>
<div class="a" style="left:832px;top:29px;width:1px;height:17px;background:#c8c8c8;"></div>
<svg class="a" style="left:451px;top:29px" width="17" height="16" viewBox="0 0 17 16"><rect x="1.5" y="1.5" width="14" height="13.5" fill="#fff" stroke="#7aa0c8"/><path d="M3 3.5 H6 M4.5 3.5 V13 M3 13 H6" stroke="#222" stroke-width="1"/><path d="M14.5 2.5 V9.5 H10 V12.5 L6 8 L10 3.5 V6.5 H12 V2.5Z" fill="#f5b04a" stroke="#c07a10" stroke-width=".8"/></svg>
<svg class="a" style="left:475px;top:29px" width="16" height="16" viewBox="0 0 16 16"><rect x="0.5" y="0.5" width="14" height="14" fill="#c6cacf" stroke="#aab0b6"/><path d="M3 4 H11 M3 6.5 H6 M3 9 H5" stroke="#9aa0a6"/><path d="M1 10.5 L5.5 6.5 V9 H13 V12.5 H5.5 V15 Z" fill="#d4c4aa" stroke="#b8a890" stroke-width=".8"/></svg>
<svg class="a" style="left:495px;top:36px" width="7" height="5" viewBox="0 0 7 5"><path d="M0 0 H6.5 L3.25 4Z" fill="#b0b0b0"/></svg>
<svg class="a" style="left:507px;top:29px" width="16" height="16" viewBox="0 0 16 16"><rect x="0.5" y="0.5" width="14" height="14" fill="#c6cacf" stroke="#aab0b6"/><path d="M5 4 H12 M9 6.5 H12 M10 9 H12" stroke="#9aa0a6"/><path d="M15 10.5 L10.5 6.5 V9 H3 V12.5 H10.5 V15 Z" fill="#d4c4aa" stroke="#b8a890" stroke-width=".8"/></svg>
<svg class="a" style="left:528px;top:36px" width="7" height="5" viewBox="0 0 7 5"><path d="M0 0 H6.5 L3.25 4Z" fill="#b0b0b0"/></svg>
<svg class="a" style="left:546px;top:29px" width="18" height="17" viewBox="0 0 18 17"><rect x="1.5" y="1.5" width="11" height="6" fill="#f6b96a" stroke="#b07a30"/><path d="M11.5 11.5 L15.5 15.5" stroke="#c07a10" stroke-width="2.2" stroke-linecap="round"/><circle cx="8.5" cy="8.5" r="4.6" fill="#cfe3fa" stroke="#3a80d0" stroke-width="1.2"/></svg>
<svg class="a" style="left:569px;top:29px" width="17" height="17" viewBox="0 0 17 17"><rect x="0.5" y="1.5" width="11" height="6" fill="#f6b96a" stroke="#b07a30"/><path d="M3.5 10 L8 5.5 V8 H15.5 V12 H8 V14.5Z" fill="#cfe3fa" stroke="#3a80d0" stroke-width="1"/></svg>
<svg class="a" style="left:590px;top:29px" width="18" height="17" viewBox="0 0 18 17"><rect x="5.5" y="1.5" width="11" height="6" fill="#f6b96a" stroke="#b07a30"/><path d="M14 10 L9.5 5.5 V8 H2 V12 H9.5 V14.5Z" fill="#cfe3fa" stroke="#3a80d0" stroke-width="1"/></svg>
<svg class="a" style="left:612px;top:29px" width="18" height="17" viewBox="0 0 18 17"><rect x="1.5" y="1.5" width="11" height="6" fill="#f6b96a" stroke="#b07a30"/><rect x="5.5" y="9.5" width="11" height="6" fill="#e4e4e4" stroke="#8a8a8a"/><path d="M1.5 9 L4 15 M13 2 L15.5 8" stroke="#555" stroke-dasharray="1 1.2"/></svg>
<svg class="a" style="left:634px;top:29px" width="18" height="17" viewBox="0 0 18 17"><rect x="1.5" y="1.5" width="12" height="10" fill="none" stroke="#444" stroke-dasharray="1 1.5"/><path d="M11.5 7.5 L16 12.5 L13 12.8 L12 16 Z" fill="#fff" stroke="#666" stroke-width=".9"/></svg>
<svg class="a" style="left:663px;top:29px" width="18" height="17" viewBox="0 0 18 17"><path d="M6.5 1.5 H13 L15.5 4.5 L13 7.5 H6.5Z" fill="#8adbe8" stroke="#3a8aa0" stroke-width="1"/><path d="M5.5 4.5 L10.5 9.5 H8 V15.5 H3 V9.5 H0.5Z" fill="#f6b96a" stroke="#b07a30" stroke-width="1"/></svg>
<svg class="a" style="left:685px;top:29px" width="18" height="17" viewBox="0 0 18 17"><path d="M5.5 12.5 L10.5 7.5 H8 V1.5 H3 V7.5 H0.5Z" fill="#f6b96a" stroke="#b07a30" stroke-width="1"/><path d="M6.5 9.5 H13 L15.5 12.5 L13 15.5 H6.5Z" fill="#8adbe8" stroke="#3a8aa0" stroke-width="1"/></svg>
<svg class="a" style="left:707px;top:29px" width="18" height="17" viewBox="0 0 18 17"><path d="M1.5 1.5 H8 L10.5 4.5 L8 7.5 H1.5Z" fill="#8adbe8" stroke="#3a8aa0" stroke-width="1"/><path d="M6.5 9.5 H13 L15.5 12.5 L13 15.5 H6.5Z" fill="#e6e6e6" stroke="#8a8a8a" stroke-width="1"/><path d="M2.5 9 L5 15 M9.5 7.5 L10.5 8.5" stroke="#333" stroke-dasharray="1 1.2"/></svg>
<svg class="a" style="left:737px;top:29px" width="17" height="17" viewBox="0 0 17 17"><path d="M11 2.5 H15 M11 4.5 H15 M11 6.5 H15 M11 8.5 H15 M11 10.5 H15 M1 13.5 H15 M1 15.5 H15" stroke="#6a6a6a" stroke-width="1"/><path d="M0.5 6 L5 1.5 V4 H10 V8.5 H5 V10.5Z" fill="#cfe3fa" stroke="#3a80d0" stroke-width="1"/></svg>
<svg class="a" style="left:758px;top:29px" width="17" height="17" viewBox="0 0 17 17"><path d="M11 2.5 H15 M11 4.5 H15 M11 6.5 H15 M11 8.5 H15 M11 10.5 H15 M1 13.5 H15 M1 15.5 H15" stroke="#6a6a6a" stroke-width="1"/><path d="M10.5 6 L6 1.5 V4 H1 V8.5 H6 V10.5Z" fill="#cfe3fa" stroke="#3a80d0" stroke-width="1"/></svg>
<svg class="a" style="left:789px;top:31px" width="14" height="14" viewBox="0 0 14 14"><circle cx="7" cy="7" r="5.8" fill="#e8706a" stroke="#b04a44" stroke-width="1"/></svg>
<svg class="a" style="left:811px;top:31px" width="14" height="14" viewBox="0 0 14 14"><rect x="1.5" y="1.5" width="11" height="11" fill="#ececec" stroke="#8a8a8a" stroke-width="1.2"/></svg>
<svg class="a" style="left:840px;top:30px" width="15" height="16" viewBox="0 0 15 16"><path d="M9 4.5 H14 M9 6.5 H14 M9 8.5 H14 M0 10.5 H14 M0 12.5 H14 M0 14.5 H14" stroke="#6a6a6a" stroke-width="1"/><path d="M1 8.5 L4 0.5 M4.5 8.5 L7.5 0.5" stroke="#5ac83a" stroke-width="2.2"/></svg>
<svg class="a" style="left:862px;top:30px" width="15" height="16" viewBox="0 0 15 16"><path d="M9 4.5 H14 M9 6.5 H14 M9 8.5 H14 M0 10.5 H14 M0 12.5 H14 M0 14.5 H14" stroke="#6a6a6a" stroke-width="1"/></svg>
<svg class="a" style="left:334px;top:560px" width="10" height="16"><path d="M1.5 1.5 L8 8 L1.5 14.5" fill="none" stroke="#9a9a9a" stroke-width="3"/><path d="M1.5 1.5 L8 8 L1.5 14.5" fill="none" stroke="#f0f0f0" stroke-width="1.2"/></svg>
<div class="a" style="left:325px;top:582px;width:852px;height:27px;background:#d4d4d4;"></div>
<div class="a" style="left:421px;top:582px;width:222px;height:27px;background:#c4c4c4;"></div>
<div class="a" style="left:422px;top:583px;width:220px;height:26px;background:#f2f2f2;"></div>
<div class="a" style="left:324px;top:582px;width:1px;height:358px;background:#a8a8a8;"></div>
<div class="t" style="left:338px;top:589px;font-size:12px;transform:scaleX(1.04);transform-origin:0 0;color:#333">Notifications</div>
<div class="t" style="left:427px;top:589px;font-size:12px;transform:scaleX(1.0125);transform-origin:0 0;">Output - C:\sourceProject\TestHttps</div>
<svg class="a" style="left:627px;top:593px" width="8" height="8" viewBox="0 0 8 8"><path d="M0.5 0.5 L7.5 7.5 M7.5 0.5 L0.5 7.5" stroke="#6a6a6a" stroke-width="1"/></svg>
<div class="a" style="left:325px;top:609px;width:852px;height:1px;background:#a8a8a8;"></div>
<div class="a" style="left:325px;top:610px;width:27px;height:330px;background:#f2f2f2;"></div>
<div class="a" style="left:352px;top:610px;width:1px;height:330px;background:#c8c8c8;"></div>
<div class="a" style="left:353px;top:610px;width:824px;height:330px;background:#fff;"></div>
<div class="t m" style="left:374px;top:610px;line-height:17px;font-size:12px;letter-spacing:-0.2px">abr. 19, 2023 8:47:47 P. M. org.eclipse.transformer.Transformer info</div>
<div class="t m" style="left:374px;top:627px;line-height:17px;font-size:12px;letter-spacing:-0.2px">INFO: Text files will be updated</div>
<div class="t m" style="left:374px;top:644px;line-height:17px;font-size:12px;letter-spacing:-0.2px">abr. 19, 2023 8:47:47 P. M. org.eclipse.transformer.Transformer info</div>
<div class="t m" style="left:374px;top:661px;line-height:17px;font-size:12px;letter-spacing:-0.2px">INFO: Java direct string updates will not be performed</div>
<div class="t m" style="left:374px;top:678px;line-height:17px;font-size:12px;letter-spacing:-0.2px">abr. 19, 2023 8:47:47 P. M. org.eclipse.transformer.Transformer info</div>
<div class="t m" style="left:374px;top:695px;line-height:17px;font-size:12px;letter-spacing:-0.2px">INFO: Per class constant mapping files are not enabled</div>
<div class="t m" style="left:374px;top:712px;line-height:17px;font-size:12px;letter-spacing:-0.2px">abr. 19, 2023 8:47:47 P. M. org.eclipse.transformer.Transformer info</div>
<div class="t m" style="left:374px;top:729px;line-height:17px;font-size:12px;letter-spacing:-0.2px">INFO: Action selected for input [ C:/sourceProject/TestHttps/target/test-classes ]: Directory Action</div>
<div class="t m" style="left:374px;top:746px;line-height:17px;font-size:12px;letter-spacing:-0.2px">abr. 19, 2023 8:47:47 P. M. org.eclipse.transformer.action.impl.ContainerChangesImpl displayTerse</div>
<div class="t m" style="left:374px;top:763px;line-height:17px;font-size:12px;letter-spacing:-0.2px">INFO: Input [ {} ] as [ {} ]: {}</div>
<div class="t m" style="left:374px;top:780px;line-height:17px;font-size:12px;letter-spacing:-0.2px">abr. 19, 2023 8:47:47 P. M. org.eclipse.transformer.action.impl.ContainerChangesImpl displayTerse</div>
<div class="t m" style="left:374px;top:797px;line-height:17px;font-size:12px;letter-spacing:-0.2px">INFO: [          All Resources ] [      0 ] Unselected [      0 ] Selected [      0 ]</div>
<div class="t m" style="left:374px;top:814px;line-height:17px;font-size:12px;letter-spacing:-0.2px">abr. 19, 2023 8:47:47 P. M. org.eclipse.transformer.action.impl.ContainerChangesImpl displayTerse</div>
<div class="t m" style="left:374px;top:831px;line-height:17px;font-size:12px;letter-spacing:-0.2px">INFO: [            All Actions ] [      0 ]  Unchanged [      0 ]  Changed [      0 ]</div>
<div class="t m" style="left:374px;top:848px;line-height:17px;font-size:12px;letter-spacing:-0.2px">------------------------------------------------------------------------</div>
<div class="t m" style="left:374px;top:865px;line-height:17px;font-size:12px;letter-spacing:-0.2px"><span style="color:#1a8f1a">BUILD SUCCESS</span></div>
<div class="t m" style="left:374px;top:882px;line-height:17px;font-size:12px;letter-spacing:-0.2px">------------------------------------------------------------------------</div>
<div class="t m" style="left:374px;top:899px;line-height:17px;font-size:12px;letter-spacing:-0.2px">Total time:  2.739 s</div>
<div class="t m" style="left:374px;top:916px;line-height:17px;font-size:12px;letter-spacing:-0.2px">Finished at: 2023-04-19T20:47:47-05:00</div>
<svg class="a" style="left:330px;top:613px" width="16" height="16" viewBox="0 0 16 16"><path d="M1 1 L8 8 L1 15Z" fill="#a8e090" stroke="#2e9a20" stroke-width="1.2" stroke-linejoin="round"/><path d="M7.5 1 L14.5 8 L7.5 15Z" fill="#a8e090" stroke="#2e9a20" stroke-width="1.2" stroke-linejoin="round"/></svg>
<svg class="a" style="left:330px;top:637px" width="16" height="16" viewBox="0 0 16 16"><path d="M1 1 L8 8 L1 15Z" fill="#e6eaa0" stroke="#a0a828" stroke-width="1.2" stroke-linejoin="round"/><path d="M7.5 1 L14.5 8 L7.5 15Z" fill="#e6eaa0" stroke="#a0a828" stroke-width="1.2" stroke-linejoin="round"/></svg>
<svg class="a" style="left:330px;top:661px" width="16" height="16" viewBox="0 0 16 16"><path d="M1 6 H8.5 V1.5 L15 8 L8.5 14.5 V10 H1Z" fill="#d4c4aa" stroke="#c0b090" stroke-width=".8"/></svg>
<svg class="a" style="left:330px;top:685px" width="17" height="17" viewBox="0 0 17 17"><rect x="3.5" y="0.5" width="12" height="15" fill="#e2ecf4" stroke="#5e6e7e" stroke-width="1"/><path d="M11.5 1.5 V4.5 M13.5 1.5 V4.5 M9.5 1.5 V4.5" stroke="#111" stroke-width="1"/><path d="M8.5 9.5 L13.5 14.5" stroke="#111" stroke-width="2.2" stroke-linecap="round"/><circle cx="5.8" cy="7" r="4.6" fill="#c8def2" stroke="#1e2a36" stroke-width="1.2"/><path d="M3.5 6.5 H8" stroke="#8aaac8" stroke-width=".8"/></svg>
<svg class="a" style="left:331px;top:711px" width="14" height="14" viewBox="0 0 14 14"><rect x="0.5" y="0.5" width="13" height="13" fill="#d6b2b2" stroke="#c09a9a"/><rect x="4.5" y="4.5" width="5" height="5" fill="#d8d4d4"/></svg>
<svg class="a" style="left:329px;top:733px" width="18" height="17" viewBox="0 0 18 17"><circle cx="4" cy="3.5" r="2.6" fill="none" stroke="#c08a10" stroke-width="1.4"/><circle cx="4" cy="3.5" r="1" fill="#5a4a20"/><path d="M4.5 13.5 L12.5 6" stroke="#26323e" stroke-width="3.8" stroke-linecap="round"/><path d="M4.5 13.5 L12.5 6" stroke="#f4f6f8" stroke-width="1.6" stroke-linecap="round"/><path d="M10 3.8 Q11 1 14 1.2 L12.6 3.4 L14 5.2 L16.3 4 Q16.5 7.5 13 8.2" fill="#f4f6f8" stroke="#26323e" stroke-width="1.1"/><path d="M7 15.6 Q6 16.8 3 16.5 L4.4 14.6 L3 12.8 L1 14 Q0.6 10.8 4 10" fill="#f4f6f8" stroke="#26323e" stroke-width="1.1"/><rect x="11.5" y="11.5" width="5" height="4" rx="0.8" fill="#f4f6f8" stroke="#26323e" stroke-width="1"/><path d="M13 12.5 V14.5 M15 12.5 V14.5" stroke="#26323e" stroke-width=".7"/></svg>
<div class="a" style="left:360px;top:610px;width:1px;height:229px;background:#000;"></div>
<div class="a" style="left:360px;top:838px;width:7px;height:1px;background:#000;"></div>
</body></html>
